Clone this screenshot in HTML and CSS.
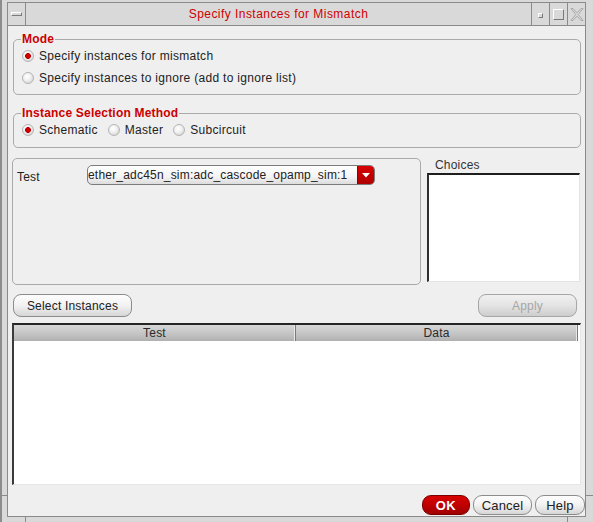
FILE: index.html
```html
<!DOCTYPE html>
<html>
<head>
<meta charset="utf-8">
<link rel="stylesheet" href="styles.css">
</head>
<body>
<div class="window">
  <span class="tick tick-l"></span>
  <span class="tick tick-r"></span>
  <span class="tick tick-bl"></span>
  <span class="tick tick-br"></span>
  <div class="titlebar">
    <div class="tb-btn menu"><span class="menu-bar"></span></div>
    <div class="title">Specify Instances for Mismatch</div>
    <div class="tb-btn"><span class="min-dot"></span></div>
    <div class="tb-btn"><span class="max-box"></span></div>
    <div class="tb-btn">
      <svg width="14" height="13" viewBox="0 0 14 13" class="close-x">
        <path d="M1 0.5 L3 0.5 L7 4.8 L11 0.5 L13 0.5 L8.2 6.5 L13 12.5 L11 12.5 L7 8.2 L3 12.5 L1 12.5 L5.8 6.5 Z" fill="none" stroke="#a8a8a8" stroke-width="1"/>
      </svg>
    </div>
  </div>
  <div class="content">
    <fieldset class="group mode">
      <legend>Mode</legend>
      <div class="radio-row"><span class="radio on"></span><span class="rlabel">Specify instances for mismatch</span></div>
      <div class="radio-row second"><span class="radio"></span><span class="rlabel">Specify instances to ignore (add to ignore list)</span></div>
    </fieldset>
    <fieldset class="group method">
      <legend>Instance Selection Method</legend>
      <div class="radio-line">
        <div class="radio-item"><span class="radio on"></span><span class="rlabel">Schematic</span></div>
        <div class="radio-item"><span class="radio"></span><span class="rlabel">Master</span></div>
        <div class="radio-item"><span class="radio"></span><span class="rlabel">Subcircuit</span></div>
      </div>
    </fieldset>
    <div class="middle">
      <div class="testbox">
        <div class="test-row">
          <span class="test-label">Test</span>
          <div class="combo">
            <span class="combo-text">ether_adc45n_sim:adc_cascode_opamp_sim:1</span>
            <span class="combo-arrow">
              <svg width="8" height="5" viewBox="0 0 8 5"><path d="M0 0 H8 L4 4.5 Z" fill="#ffffff"/></svg>
            </span>
          </div>
        </div>
      </div>
      <div class="choices">
        <div class="choices-label">Choices</div>
        <div class="listbox"></div>
      </div>
    </div>
    <div class="action-row">
      <button class="btn select-btn">Select Instances</button>
      <button class="btn apply-btn" disabled>Apply</button>
    </div>
    <div class="table">
      <div class="thead">
        <div class="th">Test</div>
        <div class="th">Data</div>
      </div>
    </div>
    <div class="footer">
      <button class="btn ok-btn">OK</button>
      <button class="btn cancel-btn">Cancel</button>
      <button class="btn help-btn">Help</button>
    </div>
  </div>
</div>
</body>
</html>
```
FILE: styles.css
```css
html, body {
  margin: 0;
  padding: 0;
}
body {
  background: #d9d9d9;
  font-family: "Liberation Sans", Arial, sans-serif;
  font-size: 12px;
  letter-spacing: 0.2px;
  color: #222;
}
.window {
  position: relative;
  width: 593px;
  height: 522px;
  box-sizing: border-box;
  padding: 2px 7px 5px 5px;
  display: flex;
  flex-direction: column;
  background: #d9d9d9;
  border-left: 2px solid #8c8c8c;
}
.tick {
  position: absolute;
  background: #8a8a8a;
}
.tick-l { left: 0; top: 495px; width: 5px; height: 1px; }
.tick-r { right: 0; top: 495px; width: 7px; height: 1px; }
.tick-bl { left: 23px; bottom: 0; width: 1px; height: 5px; }
.tick-br { right: 25px; bottom: 0; width: 1px; height: 5px; }

/* Title bar */
.titlebar {
  display: flex;
  height: 22px;
  border: 1px solid #8a8a8a;
  background: #d9d9d9;
}
.tb-btn {
  width: 17px;
  border-left: 1px solid #8a8a8a;
  display: flex;
  align-items: center;
  justify-content: center;
}
.tb-btn.menu {
  border-left: none;
  border-right: 1px solid #8a8a8a;
}
.menu-bar {
  width: 9px;
  height: 2px;
  border-top: 1px solid #ffffff;
  border-left: 1px solid #ffffff;
  border-right: 1px solid #7a7a7a;
  border-bottom: 1px solid #7a7a7a;
  background: #d9d9d9;
}
.min-dot {
  width: 3px;
  height: 3px;
  border-top: 1px solid #ffffff;
  border-left: 1px solid #ffffff;
  border-right: 1px solid #7a7a7a;
  border-bottom: 1px solid #7a7a7a;
  margin-top: 2px;
}
.max-box {
  width: 9px;
  height: 9px;
  border-top: 1px solid #ffffff;
  border-left: 1px solid #ffffff;
  border-right: 1px solid #7a7a7a;
  border-bottom: 1px solid #7a7a7a;
}
.title {
  flex: 1;
  text-align: center;
  color: #d00000;
  font-size: 12px;
  letter-spacing: 0.45px;
  line-height: 22px;
}

/* Content */
.content {
  flex: 1;
  background: #efefef;
  border-left: 1px solid #8a8a8a;
  border-right: 1px solid #8a8a8a;
  border-bottom: 1px solid #8a8a8a;
  padding: 0 4px 0 5px;
  display: flex;
  flex-direction: column;
}
.group {
  margin: 0;
  border: 1px solid #aaaaaa;
  border-radius: 5px;
  padding: 0 8px 6px 8px;
  min-width: 0;
}
.group legend {
  color: #cc0000;
  font-weight: bold;
  font-size: 12px;
  line-height: 14px;
  padding: 0 1px;
  margin-left: -1px;
  letter-spacing: 0.2px;
}
.mode { margin-top: 6px; }
.method { margin-top: 11px; padding-bottom: 7px; }
.rlabel { letter-spacing: 0.3px; }
.radio-row {
  display: flex;
  align-items: center;
  height: 20px;
  gap: 5px;
}
.radio-row.second { margin-top: 2px; }
.radio-line {
  display: flex;
  height: 20px;
  align-items: center;
  gap: 10px;
}
.radio-item {
  display: flex;
  align-items: center;
  gap: 5px;
}
.radio {
  width: 12px;
  height: 12px;
  box-sizing: border-box;
  border-radius: 50%;
  border: 1px solid #b4b4b4;
  background: radial-gradient(circle at 40% 35%, #ffffff 0%, #f2f2f2 40%, #c8c8c8 100%);
  flex: none;
}
.radio.on {
  background:
    radial-gradient(circle at 50% 50%, #e00000 0, #b80000 2.6px, transparent 3.2px),
    radial-gradient(circle at 40% 35%, #ffffff 0%, #f2f2f2 40%, #c8c8c8 100%);
}

/* Middle */
.middle {
  display: flex;
  margin-top: 10px;
  height: 127px;
}
.testbox {
  width: 409px;
  box-sizing: border-box;
  margin-left: -1px;
  border: 1px solid #aaaaaa;
  border-radius: 5px;
  padding: 6px 4px 0 4px;
}
.test-row {
  display: flex;
  align-items: flex-start;
}
.test-label {
  width: 70px;
  line-height: 20px;
  margin-top: 2px;
}
.combo {
  display: flex;
  width: 288px;
  height: 20px;
  box-sizing: border-box;
  border: 1px solid #7c7c7c;
  border-radius: 5px;
  background: linear-gradient(#ffffff, #f4f4f4 60%, #dcdcdc);
  overflow: hidden;
}
.combo-text {
  flex: 1;
  line-height: 18px;
  white-space: nowrap;
  overflow: hidden;
}
.combo-arrow {
  width: 16px;
  background: linear-gradient(#d80000, #b00000);
  border-left: 1px solid #900000;
  display: flex;
  align-items: center;
  justify-content: center;
}
.choices {
  margin-left: 6px;
  width: 154px;
  display: flex;
  flex-direction: column;
}
.choices-label {
  color: #333;
  padding-left: 8px;
  line-height: 14px;
  height: 15px;
}
.listbox {
  width: 153px;
  height: 109px;
  box-sizing: border-box;
  background: #ffffff;
  border-top: 2px solid #1e1e1e;
  border-left: 2px solid #2e2e2e;
  border-right: 1px solid #e4e4e4;
  border-bottom: 1px solid #e4e4e4;
}

/* Buttons */
.btn {
  font-family: "Liberation Sans", Arial, sans-serif;
  font-size: 12px;
  letter-spacing: 0.2px;
  color: #222;
  border: 1px solid #8c8c8c;
  border-radius: 8px;
  background: linear-gradient(#fdfdfd, #f2f2f2 50%, #d6d6d6);
  padding: 0;
  margin: 0;
}
.action-row {
  display: flex;
  justify-content: space-between;
  margin-top: 9px;
  height: 23px;
}
.select-btn { width: 119px; height: 23px; }
.apply-btn {
  width: 99px;
  height: 23px;
  margin-right: 4px;
  color: #a6a6a6;
  border-color: #a6a6a6;
  background: linear-gradient(#f0f0f0, #e4e4e4 50%, #cdcdcd);
}

/* Table */
.table {
  margin-top: 6px;
  margin-left: -1px;
  width: 569px;
  height: 162px;
  box-sizing: border-box;
  background: #ffffff;
  border-top: 2px solid #262626;
  border-left: 2px solid #3a3a3a;
  border-right: 1px solid #e6e6e6;
  border-bottom: 1px solid #e6e6e6;
}
.thead {
  display: grid;
  grid-template-columns: 282px 282px;
  height: 16px;
}
.th {
  background: linear-gradient(#d8d8d8, #c2c2c2 60%, #b0b0b0);
  border-right: 1px solid #7a7a7a;
  box-shadow: inset -1px 0 0 #e8e8e8;
  text-align: center;
  line-height: 16px;
  color: #2a2a2a;
}

/* Footer */
.footer {
  display: flex;
  justify-content: flex-end;
  gap: 3px;
  margin-top: 10px;
  margin-right: -4px;
  height: 20px;
}
.footer .btn { height: 20px; border-radius: 9px; font-size: 13px; }
.ok-btn {
  width: 48px;
  color: #ffffff;
  font-weight: bold;
  letter-spacing: 0.6px;
  border-color: #7a0000;
  background: linear-gradient(#d80000, #c00000 50%, #a00000);
}
.cancel-btn { width: 59px; }
.help-btn { width: 50px; }
```
